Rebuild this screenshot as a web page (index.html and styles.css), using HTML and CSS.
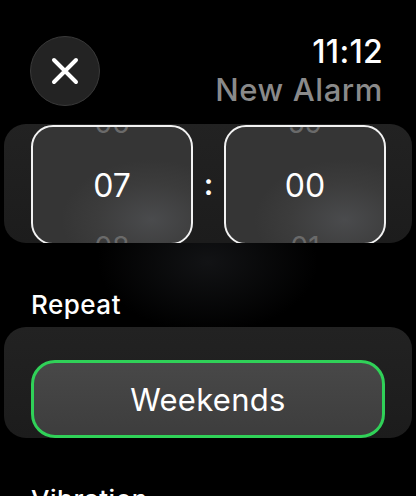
FILE: index.html
```html
<!DOCTYPE html>
<html lang="en">
<head>
    <meta charset="UTF-8">
    <meta name="viewport" content="width=device-width, initial-scale=1.0">
    <title>New Alarm</title>
    <link rel="stylesheet" href="styles.css">
</head>
<body>
    <div class="screen">
        <header class="topbar">
            <button class="close-btn" aria-label="Close">
                <svg width="28" height="28" viewBox="0 0 28 28">
                    <path d="M3 3 L25 25 M25 3 L3 25" stroke="#fff" stroke-width="4" stroke-linecap="round"/>
                </svg>
            </button>
            <div class="title-block">
                <div class="clock">11:12</div>
                <div class="title">New Alarm</div>
            </div>
        </header>

        <section class="panel picker">
            <div class="wheel">
                <span class="ghost ghost-top">06</span>
                <span class="value">07</span>
                <span class="ghost ghost-bottom">08</span>
            </div>
            <span class="colon">:</span>
            <div class="wheel">
                <span class="ghost ghost-top">59</span>
                <span class="value">00</span>
                <span class="ghost ghost-bottom">01</span>
            </div>
        </section>

        <h2 class="section-label">Repeat</h2>
        <section class="panel repeat">
            <button class="option">Weekends</button>
        </section>

        <h2 class="section-label">Vibration</h2>
    </div>
</body>
</html>
```

FILE: styles.css
```css
body {
    margin: 0;
    padding: 0;
    background: #000;
    font-family: Inter, "Noto Sans", sans-serif;
    color: #fff;
}
.screen {
    width: 416px;
    height: 496px;
    overflow: hidden;
    background: radial-gradient(ellipse 110px 70px at 208px 262px, #121315 0%, #000 100%);
}
.topbar {
    display: flex;
    justify-content: space-between;
    align-items: flex-start;
    padding: 36px 33px 0 30px;
    height: 88px;
}
.close-btn {
    width: 70px;
    height: 70px;
    border-radius: 50%;
    background: #232323;
    border: 1.5px solid #3a3a3a;
    display: flex;
    align-items: center;
    justify-content: center;
    padding: 0;
}
.title-block {
    text-align: right;
}
.clock {
    font-size: 32px;
    font-weight: 500;
    line-height: 32px;
    letter-spacing: 0.3px;
}
.title {
    margin-top: 3px;
    font-size: 31px;
    font-weight: 500;
    line-height: 38px;
    letter-spacing: 0.6px;
    color: #8a8a8a;
}
.panel {
    margin: 0 4px;
    border-radius: 22px;
    background: linear-gradient(180deg, #222 0%, #1c1c1c 100%);
    overflow: hidden;
}
.picker {
    display: flex;
    align-items: flex-start;
    height: 119px;
    padding: 1px 0 0 27px;
    box-sizing: border-box;
}
.wheel {
    position: relative;
    width: 162px;
    height: 120px;
    flex: none;
    box-sizing: border-box;
    border: 2px solid #f2f2f2;
    border-radius: 22px;
    background: radial-gradient(ellipse 90px 60px at 75% 80%, #4a4b4d 0%, #3c3c3c 60%, #353535 100%);
    display: flex;
    align-items: center;
    justify-content: center;
    overflow: hidden;
}
.value {
    font-size: 32px;
    line-height: 1;
    margin-top: 2px;
}
.ghost {
    position: absolute;
    left: 0;
    right: 0;
    text-align: center;
    font-size: 28px;
    line-height: 1;
    color: #6a6a6a;
}
.ghost-top {
    top: -18px;
}
.ghost-bottom {
    bottom: -18px;
}
.colon {
    width: 31px;
    text-align: center;
    font-size: 30px;
    line-height: 118px;
    font-weight: 600;
}
.section-label {
    margin: 0;
    padding: 47px 0 0 31px;
    font-size: 26px;
    font-weight: 500;
    line-height: 30px;
    letter-spacing: 0.5px;
}
.repeat {
    margin-top: 7px;
    padding: 33px 27px 0;
    height: 111px;
    box-sizing: border-box;
}
.option {
    width: 100%;
    height: 78px;
    box-sizing: border-box;
    border: 3px solid #30d158;
    border-radius: 24px;
    background: linear-gradient(180deg, #484848 0%, #3d3d3d 100%);
    color: #fff;
    font-family: inherit;
    font-size: 31px;
    font-weight: 400;
    letter-spacing: 0.3px;
    padding: 0;
}
```
